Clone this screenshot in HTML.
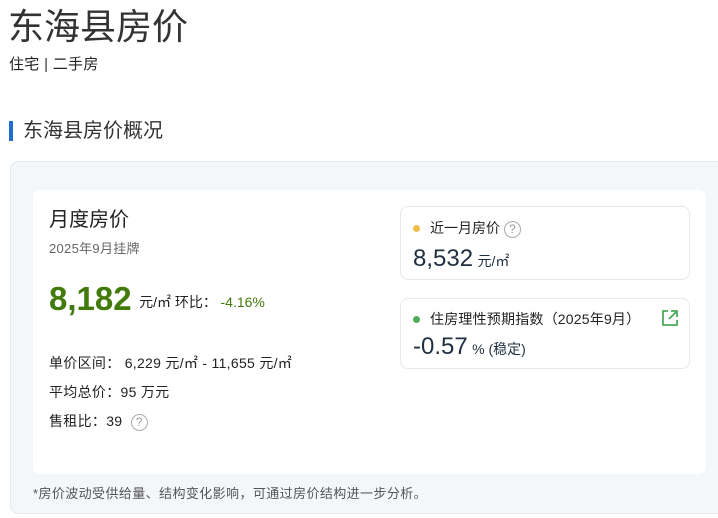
<!DOCTYPE html>
<html><head><meta charset="utf-8"><style>
*{margin:0;padding:0;box-sizing:border-box}
body{width:718px;height:518px;overflow:hidden;background:#fff;font-family:"Liberation Sans","Noto Sans CJK SC",sans-serif;color:#222;position:relative}
.a{position:absolute;white-space:nowrap}
.q{display:inline-block;width:17px;height:17px;border:1.5px solid #aaa;border-radius:50%;color:#999;font-size:12px;text-align:center;line-height:14px;vertical-align:middle}
</style></head><body>
<div class="a" style="left:8px;top:4px;font-size:36px;color:#333;line-height:46px">东海县房价</div>
<div class="a" style="left:9px;top:55px;font-size:15px;line-height:20px;color:#222;letter-spacing:0.3px">住宅 <span style="color:#333">|</span> 二手房</div>
<div class="a" style="left:9px;top:121px;width:4px;height:20px;background:#1f6fd1"></div>
<div class="a" style="left:23px;top:118px;font-size:20px;line-height:26px;color:#333">东海县房价概况</div>
<div class="a" style="left:10px;top:161px;width:720px;height:353px;background:#f4f7fa;border:1px solid #e3e9ef;border-radius:9px"></div>
<div class="a" style="left:33px;top:190px;width:673px;height:284px;background:#fff;border-radius:7px"></div>
<div class="a" style="left:49px;top:206px;font-size:20px;line-height:28px;color:#222">月度房价</div>
<div class="a" style="left:49px;top:240px;font-size:13px;line-height:18px;color:#666;letter-spacing:0.3px">2025年9月挂牌</div>
<div class="a" style="left:49px;top:279px;line-height:40px;font-size:13px"><span style="font-size:33px;font-weight:bold;color:#437a0c;vertical-align:-3px">8,182</span> <span style="font-size:14px;color:#222">&nbsp;元/㎡ 环比：</span> <span style="font-size:14px;color:#437a0c">-4.16%</span></div>
<div class="a" style="left:49px;top:353px;font-size:14px;line-height:20px;letter-spacing:0.3px">单价区间： 6,229 元/㎡ - 11,655 元/㎡</div>
<div class="a" style="left:49px;top:382px;font-size:14px;line-height:20px;letter-spacing:0.3px">平均总价：95 万元</div>
<div class="a" style="left:49px;top:411px;font-size:14px;line-height:20px;letter-spacing:0.3px">售租比：39 &nbsp;<span class="q">?</span></div>
<div class="a" style="left:400px;top:206px;width:290px;height:74px;border:1px solid #e3e9ee;border-radius:8px"></div>
<div class="a" style="left:413px;top:225px;width:7px;height:7px;border-radius:50%;background:#f1bd4a"></div>
<div class="a" style="left:430px;top:218px;font-size:14px;line-height:20px">近一月房价 <span class="q">?</span></div>
<div class="a" style="left:413px;top:244px;line-height:30px;color:#1f2f3f"><span style="font-size:24px">8,532</span> <span style="font-size:14px">元/㎡</span></div>
<div class="a" style="left:400px;top:298px;width:290px;height:71px;border:1px solid #e3e9ee;border-radius:8px"></div>
<div class="a" style="left:413px;top:316px;width:7px;height:7px;border-radius:50%;background:#4faa5a"></div>
<div class="a" style="left:430px;top:309px;font-size:14px;line-height:20px;letter-spacing:0.2px">住房理性预期指数（2025年9月）</div>
<svg class="a" style="left:661px;top:309px" width="18" height="18" viewBox="0 0 18 18" fill="none" stroke="#4faa5a" stroke-width="1.8"><path d="M7 2H2v14h14v-5"/><path d="M10 2h6v6M16 2L8 10"/></svg>
<div class="a" style="left:413px;top:332px;line-height:30px;color:#1f2f3f"><span style="font-size:24px">-0.57</span> <span style="font-size:14px">% (稳定)</span></div>
<div class="a" style="left:33px;top:485px;font-size:13px;line-height:18px;color:#555;letter-spacing:0.4px">*房价波动受供给量、结构变化影响，可通过房价结构进一步分析。</div>
</body></html>
